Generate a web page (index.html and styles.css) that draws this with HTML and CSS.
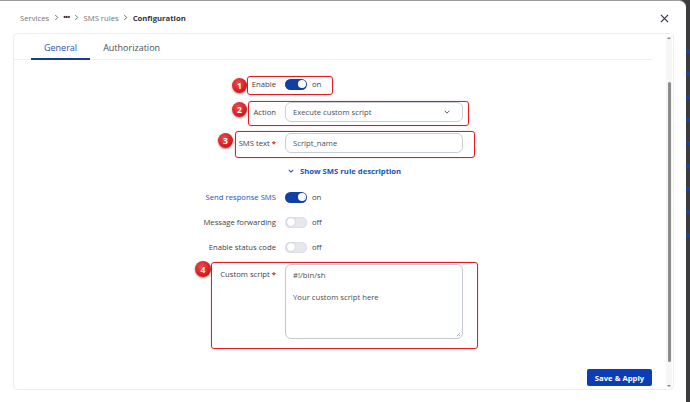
FILE: index.html
```html
<!DOCTYPE html>
<html lang="en">
<head>
    <meta charset="UTF-8">
    <meta name="viewport" content="width=device-width, initial-scale=1.0">
    <title>SMS rules - Configuration</title>
    <link rel="stylesheet" href="styles.css">
</head>
<body>

    <div class="modal">
        <div class="head">
            <nav class="crumbs">
                <span>Services</span>
                <svg class="sep" viewBox="0 0 6 8"><path d="M1.5 1 L4.5 4 L1.5 7"/></svg>
                <span class="dots">&bull;&bull;&bull;</span>
                <svg class="sep" viewBox="0 0 6 8"><path d="M1.5 1 L4.5 4 L1.5 7"/></svg>
                <span>SMS rules</span>
                <svg class="sep" viewBox="0 0 6 8"><path d="M1.5 1 L4.5 4 L1.5 7"/></svg>
                <span class="current">Configuration</span>
            </nav>
            <button class="close" aria-label="Close">
                <svg viewBox="0 0 10 10"><path d="M1 1 L9 9 M9 1 L1 9"/></svg>
            </button>
        </div>

        <div class="card">
            <div class="scroll">
                <div class="tabs">
                    <a class="tab active">General</a>
                    <a class="tab">Authorization</a>
                </div>

                <div class="form">
                    <div class="row r-enable">
                        <label>Enable</label>
                        <div class="control">
                            <span class="toggle on"></span><span class="state">on</span>
                        </div>
                    </div>

                    <div class="row r-action">
                        <label>Action</label>
                        <div class="control">
                            <div class="select">
                                <span>Execute custom script</span>
                                <svg viewBox="0 0 8 5"><path d="M1 1 L4 4 L7 1"/></svg>
                            </div>
                        </div>
                    </div>

                    <div class="row r-text">
                        <label>SMS text <b class="req">*</b></label>
                        <div class="control">
                            <div class="input">Script_name</div>
                        </div>
                    </div>

                    <div class="row r-link">
                        <label></label>
                        <div class="control">
                            <a class="more">
                                <svg viewBox="0 0 8 5"><path d="M1 1 L4 4 L7 1"/></svg>
                                Show SMS rule description
                            </a>
                        </div>
                    </div>

                    <div class="row r-switch first">
                        <label class="blue">Send response SMS</label>
                        <div class="control">
                            <span class="toggle on"></span><span class="state">on</span>
                        </div>
                    </div>

                    <div class="row r-switch">
                        <label>Message forwarding</label>
                        <div class="control">
                            <span class="toggle"></span><span class="state">off</span>
                        </div>
                    </div>

                    <div class="row r-switch">
                        <label>Enable status code</label>
                        <div class="control">
                            <span class="toggle"></span><span class="state">off</span>
                        </div>
                    </div>

                    <div class="row r-script">
                        <label>Custom script <b class="req">*</b></label>
                        <div class="control">
                            <div class="textarea">
                                <p>#!/bin/sh</p>
                                <p>Your custom script here</p>
                                <svg class="grip" viewBox="0 0 6 6"><path d="M5 1 L1 5 M5 3.5 L3.5 5"/></svg>
                            </div>
                        </div>
                    </div>
                </div>

                <div class="footer">
                    <button class="save">Save &amp; Apply</button>
                </div>
            </div>

            <div class="scrollbar">
                <span class="arrow up"></span>
                <span class="thumb"></span>
                <span class="arrow down"></span>
            </div>
        </div>

        <!-- Numbered annotations over the form -->
        <div class="mark m1"></div>
        <div class="mark m2"></div>
        <div class="mark m3"></div>
        <div class="mark m4"></div>
        <span class="badge b1">1</span>
        <span class="badge b2">2</span>
        <span class="badge b3">3</span>
        <span class="badge b4">4</span>
    </div>

</body>
</html>
```

FILE: styles.css
```css
body {
    margin: 0;
    padding: 0;
    font-family: "Open Sans", "Noto Sans", sans-serif;
    background-color: #3b3b3d;
    background-image: repeating-linear-gradient(to bottom, transparent 0 9px, #22418a 9px 13px, transparent 13px 23px);
    background-size: 100% 200px;
    background-position: 0 40px;
    background-repeat: no-repeat;
    height: 402px;
    overflow: hidden;
}

.modal {
    position: relative;
    width: 686px;
    height: 410px;
    background: #fff;
    border-top: 1px solid #9c9c9c;
    border-top-right-radius: 7px;
    box-sizing: border-box;
}

/* Header */
.head {
    height: 32px;
    display: flex;
    align-items: center;
    justify-content: space-between;
    padding: 0 17px 0 20px;
}

.crumbs {
    display: flex;
    align-items: center;
    gap: 3.5px;
    font-size: 7.7px;
    color: #707378;
    padding-top: 1px;
}

.crumbs .sep {
    width: 5px;
    height: 7px;
    margin: 0 1px;
    fill: none;
    stroke: #55585e;
    stroke-width: 1;
}

.crumbs .dots {
    color: #2b2d33;
    font-size: 7px;
    letter-spacing: -0.5px;
    font-weight: 700;
}

.crumbs .current {
    color: #33363b;
    font-weight: 700;
}

.close {
    border: 0;
    background: none;
    padding: 0;
    width: 9px;
    height: 9px;
    margin-top: 2px;
    display: flex;
}

.close svg {
    width: 9px;
    height: 9px;
    fill: none;
    stroke: #2f3340;
    stroke-width: 1.3;
}

/* Card */
.card {
    margin-left: 13px;
    width: 661px;
    height: 357px;
    border: 1px solid #eceef2;
    border-radius: 4px;
    box-sizing: border-box;
    display: flex;
}

.scroll {
    flex: 1;
    margin-right: 14px;
    display: flex;
    flex-direction: column;
}

.tabs {
    display: flex;
    padding-left: 17px;
    border-bottom: 1px solid #eef0f5;
}

.tab {
    font-size: 9px;
    line-height: 12px;
    padding: 8px 13px 4px;
    color: #4a4d55;
    border-bottom: 2px solid transparent;
    margin-bottom: -1px;
}

.tab.active {
    color: #1f4fb8;
    border-bottom-color: #1a3b93;
}

/* Form */
.form {
    display: flex;
    flex-direction: column;
}

.row {
    display: flex;
    align-items: center;
    gap: 9px;
    font-size: 7.7px;
    color: #3f4249;
}

.row label {
    width: 262px;
    flex: none;
    text-align: right;
}

.row label.blue {
    color: #2251bd;
}

.req {
    color: #e0262e;
    font-weight: 700;
}

.control {
    display: flex;
    align-items: center;
}

.r-enable {
    margin-top: 14px;
    height: 20px;
}

.r-action {
    margin-top: 8px;
    height: 20px;
}

.r-text {
    margin-top: 11px;
    height: 20px;
}

.r-link {
    margin-top: 11px;
    height: 14px;
}

.r-switch {
    margin-top: 9px;
    height: 16px;
}

.r-switch.first {
    margin-top: 11px;
}

.r-script {
    margin-top: 9px;
    align-items: flex-start;
}

.r-script label {
    margin-top: 5px;
}

.toggle {
    position: relative;
    width: 22px;
    height: 11px;
    border-radius: 6px;
    background: #e6e8ee;
    box-shadow: inset 0 0 0 1px #dcdfe6;
}

.toggle::after {
    content: "";
    position: absolute;
    top: 1.5px;
    left: 1.5px;
    width: 8px;
    height: 8px;
    border-radius: 50%;
    background: #fff;
    box-shadow: 0 0 1px rgba(0, 0, 0, 0.35);
}

.toggle.on {
    background: #103fa6;
    box-shadow: none;
}

.toggle.on::after {
    left: 12.5px;
    box-shadow: none;
}

.state {
    margin-left: 5px;
}

.select,
.input {
    width: 178px;
    height: 20px;
    box-sizing: border-box;
    border: 1px solid #c9cdd6;
    border-radius: 6px;
    padding: 0 7px;
    display: flex;
    align-items: center;
    justify-content: space-between;
    color: #4a4d55;
}

.select svg {
    width: 6px;
    height: 4px;
    margin-right: 5px;
    fill: none;
    stroke: #4a4d55;
    stroke-width: 1.2;
}

.more {
    display: flex;
    align-items: center;
    gap: 6px;
    margin-left: 3px;
    color: #2251bd;
    font-weight: 700;
}

.more svg {
    width: 6px;
    height: 4px;
    fill: none;
    stroke: #2251bd;
    stroke-width: 1.4;
}

.textarea {
    position: relative;
    width: 178px;
    height: 75px;
    box-sizing: border-box;
    border: 1px solid #c4c8d2;
    border-radius: 6px;
    padding: 5px 7px;
    color: #4a4d55;
}

.textarea p {
    margin: 0 0 11px;
    line-height: 11px;
}

.grip {
    position: absolute;
    right: 1px;
    bottom: 1px;
    width: 5px;
    height: 5px;
    fill: none;
    stroke: #8c8f96;
    stroke-width: 0.8;
}

.footer {
    margin-top: auto;
    display: flex;
    justify-content: flex-end;
    padding-bottom: 3px;
}

.save {
    width: 65px;
    height: 17px;
    border: 0;
    border-radius: 2px;
    background: #0b3db6;
    color: #fff;
    font-family: inherit;
    font-size: 7.7px;
    font-weight: 700;
    padding: 0;
}

/* Scrollbar */
.scrollbar {
    width: 6px;
    margin: 2px 1px 1px 0;
    background: #f6f6f9;
    display: flex;
    flex-direction: column;
    align-items: center;
}

.arrow {
    width: 0;
    height: 0;
    border-left: 2px solid transparent;
    border-right: 2px solid transparent;
}

.arrow.up {
    border-bottom: 2px solid #8a8a8a;
    margin-top: 1px;
}

.arrow.down {
    border-top: 2px solid #8a8a8a;
    margin-bottom: 1px;
}

.thumb {
    width: 3px;
    margin-top: 43px;
    height: 280px;
    border-radius: 2px;
    background: #8d8d8d;
    margin-bottom: auto;
}

/* Annotations */
.mark {
    position: absolute;
    border: 1.5px solid #e31b23;
    border-radius: 3px;
    box-shadow: 0 0 2px rgba(200, 0, 0, 0.25);
    box-sizing: border-box;
}

.m1 { left: 247px; top: 75px; width: 86px; height: 19px; }
.m2 { left: 248px; top: 100px; width: 221px; height: 25px; }
.m3 { left: 235px; top: 130px; width: 240px; height: 27px; }
.m4 { left: 211px; top: 261px; width: 267px; height: 87px; }

.badge {
    position: absolute;
    width: 15px;
    height: 15px;
    border-radius: 50%;
    background: radial-gradient(circle at 40% 35%, #f4484a, #d0161c 70%, #a80d12);
    box-shadow: 0 1px 2px rgba(0, 0, 0, 0.45);
    color: #fff;
    font-size: 8.5px;
    font-weight: 700;
    display: flex;
    align-items: center;
    justify-content: center;
}

.b1 { left: 232px; top: 77px; }
.b2 { left: 232px; top: 101px; }
.b3 { left: 218px; top: 132px; }
.b4 { left: 195px; top: 260px; width: 16px; height: 16px; }
```
